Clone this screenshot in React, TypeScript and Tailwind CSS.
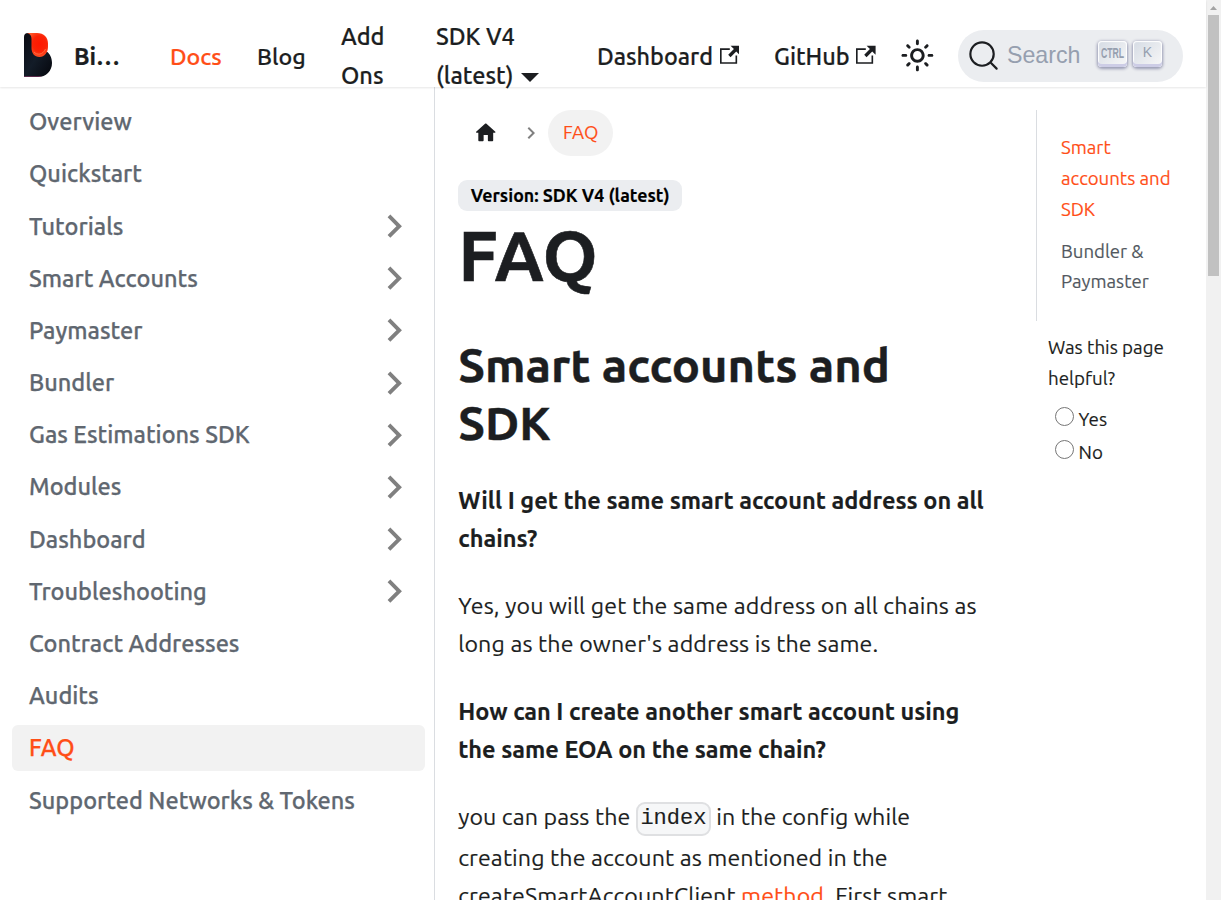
import type { ReactNode } from "react";

const sidebarItems: { label: string; nested?: boolean; active?: boolean }[] = [
  { label: "Overview" },
  { label: "Quickstart" },
  { label: "Tutorials", nested: true },
  { label: "Smart Accounts", nested: true },
  { label: "Paymaster", nested: true },
  { label: "Bundler", nested: true },
  { label: "Gas Estimations SDK", nested: true },
  { label: "Modules", nested: true },
  { label: "Dashboard", nested: true },
  { label: "Troubleshooting", nested: true },
  { label: "Contract Addresses" },
  { label: "Audits" },
  { label: "FAQ", active: true },
  { label: "Supported Networks & Tokens" },
];

function Chevron({ className }: { className: string }) {
  return (
    <svg viewBox="0 0 24 24" className={className} fill="#808080">
      <path transform="rotate(90 12 12)" d="M12 8l-6 6 1.41 1.41L12 10.83l4.59 4.58L18 14z" />
    </svg>
  );
}

function ExternalIcon() {
  return (
    <svg viewBox="0 0 24 24" className="ml-[6.5px] inline h-[19.6px] w-[19.6px] align-baseline" fill="currentColor">
      <path d="M21 13v10h-21v-19h12v2h-10v15h17v-8h2zm3-12h-10.988l4.035 4-6.977 7.07 2.828 2.828 6.977-7.07 4.125 4.172v-11z" />
    </svg>
  );
}

function Logo() {
  return (
    <svg viewBox="0 0 28 44" className="h-11 w-7">
      <defs>
        <linearGradient id="ink" x1="0" y1="0" x2="1" y2="1">
          <stop offset="0" stopColor="#0a0a12" />
          <stop offset="0.5" stopColor="#131c28" />
          <stop offset="1" stopColor="#05060c" />
        </linearGradient>
        <radialGradient id="flame" cx="0.6" cy="0.45" r="0.6">
          <stop offset="0" stopColor="#ff1800" />
          <stop offset="0.55" stopColor="#fb2306" />
          <stop offset="1" stopColor="#ff5a2c" />
        </radialGradient>
      </defs>
      <path d="M0 4Q0 0 4 0H12L22.500 18.500C26 20.500 28 25 28 30C28 38 22 44 14 44H0Z" fill="url(#ink)" />
      <path d="M0 43.600H17" stroke="#9b3a6e" strokeWidth="0.6" />
      <path d="M3 0H13C20 0 24 4.500 24 10.500V14C24 19.500 20.500 24 15.500 24C10.500 24 7.500 20 7.500 15V6C7.500 2.500 6 0.600 3 0Z" fill="url(#flame)" />
      <path d="M10 19C13 22.500 19 22 21.500 16" fill="none" stroke="#ff7045" strokeWidth="0.9" />
    </svg>
  );
}

function SunIcon() {
  return (
    <svg viewBox="0 0 24 24" className="h-[34.8px] w-[34.8px]" fill="currentColor">
      <path d="M12,9c1.65,0,3,1.35,3,3s-1.35,3-3,3s-3-1.35-3-3S10.35,9,12,9 M12,7c-2.76,0-5,2.24-5,5s2.24,5,5,5s5-2.24,5-5 S14.76,7,12,7L12,7z M2,13l2,0c0.55,0,1-0.45,1-1s-0.45-1-1-1l-2,0c-0.55,0-1,0.45-1,1S1.45,13,2,13z M20,13l2,0c0.55,0,1-0.45,1-1 s-0.45-1-1-1l-2,0c-0.55,0-1,0.45-1,1S19.45,13,20,13z M11,2v2c0,0.55,0.45,1,1,1s1-0.45,1-1V2c0-0.55-0.45-1-1-1S11,1.45,11,2z M11,20v2c0,0.55,0.45,1,1,1s1-0.45,1-1v-2c0-0.55-0.45-1-1-1C11.45,19,11,19.45,11,20z M5.99,4.58c-0.39-0.39-1.03-0.39-1.41,0 c-0.39,0.39-0.39,1.03,0,1.41l1.06,1.06c0.39,0.39,1.03,0.39,1.41,0s0.39-1.03,0-1.41L5.99,4.58z M18.36,16.95 c-0.39-0.39-1.03-0.39-1.41,0c-0.39,0.39-0.39,1.03,0,1.41l1.06,1.06c0.39,0.39,1.03,0.39,1.41,0c0.39-0.39,0.39-1.03,0-1.41 L18.36,16.95z M19.42,5.99c0.39-0.39,0.39-1.03,0-1.41c-0.39-0.39-1.03-0.39-1.41,0l-1.06,1.06c-0.39,0.39-0.39,1.03,0,1.41 s1.03,0.39,1.41,0L19.42,5.99z M7.05,18.36c0.39-0.39,0.39-1.03,0-1.41c-0.39-0.39-1.03-0.39-1.41,0l-1.06,1.06 c-0.39,0.39-0.39,1.03,0,1.41s1.03,0.39,1.41,0L7.05,18.36z" />
    </svg>
  );
}

function Key({ children }: { children: ReactNode }) {
  return (
    <span className="flex h-[26px] w-[29px] justify-center rounded-[4px] bg-[linear-gradient(-225deg,#d5dbe4,#f8f8f8)] text-[#969faf] shadow-[inset_0_-3px_0_0_#cdcde6,inset_0_0_1px_1px_#fff,0_1px_3px_1px_rgba(30,35,90,0.4)]">
      {children}
    </span>
  );
}

function Navbar() {
  return (
    <header className="relative z-10 flex h-[87px] shrink-0 items-center bg-white pl-6 font-medium whitespace-nowrap shadow-[0_1px_2px_0_rgba(0,0,0,0.1)] [-webkit-text-stroke:0.2px]">
      <div className="w-[50px] pt-[23px]"><Logo /></div>
      <nav className="flex items-center pt-[24px] leading-[39px]">
        <b className="w-24 pt-[2px] font-bold">Bi…</b>
        <a className="w-[87px] pt-[2px] text-[23.2px] text-[#ff4e17]">Docs</a>
        <a className="w-[84px] pt-[2px] text-[23.2px]">Blog</a>
        <a className="w-[95px]">Add<br />Ons</a>
        <a className="w-[161px]">
          SDK V4<br />(latest)
          <svg viewBox="0 0 18 9" className="ml-[8px] inline h-[9px] w-[18px]" fill="currentColor"><path d="M0 0H18L9 9Z" /></svg>
        </a>
        <a className="w-[177px] pt-[2px] text-[23.4px]">Dashboard<ExternalIcon /></a>
        <a className="w-[125px] pt-[2px]">GitHub<ExternalIcon /></a>
      </nav>
      <div className="mt-[24px] flex w-[59px] pl-[1px]"><SunIcon /></div>
      <div className="mt-[25px] flex h-[52px] w-[225px] items-center rounded-full bg-[#ebedf0] pl-[10px] font-['Liberation_Sans',sans-serif] font-normal [-webkit-text-stroke:0]">
        <svg viewBox="0 0 20 20" className="mb-[2px] h-[31px] w-[31px]" fill="none" stroke="currentColor" strokeWidth="1.4" strokeLinecap="round" strokeLinejoin="round">
          <path d="M14.386 14.386l4.0877 4.0877-4.0877-4.0877c-2.9418 2.9419-7.7115 2.9419-10.6533 0-2.9419-2.9418-2.9419-7.7115 0-10.6533 2.9418-2.9419 7.7115-2.9419 10.6533 0 2.9419 2.9418 2.9419 7.7115 0 10.6533z" />
        </svg>
        <span className="w-[99px] pb-[2px] pl-[8px] text-[23.2px] text-[#969faf]">Search</span>
        <span className="flex gap-[6px] pb-[4px]">
          <Key><span className="w-[23px]"><span className="block origin-left scale-x-[0.62] text-[14px] leading-[24px] font-bold">CTRL</span></span></Key>
          <Key><span className="text-[14px] leading-[23px]">K</span></Key>
        </span>
      </div>
    </header>
  );
}

function Sidebar() {
  return (
    <aside className="w-[435px] shrink-0 border-r border-[#dadde1] pt-[11.6px] pr-[9px] pl-3">
      <ul className="flex flex-col gap-[5.8px]">
        {sidebarItems.map((item) => (
          <li
            key={item.label}
            className={
              "flex h-[46.4px] items-center justify-between rounded-[6px] pr-[8px] pl-[17px] font-medium whitespace-nowrap [-webkit-text-stroke:0.25px] " +
              (item.active ? "bg-[#f2f2f2] text-[#ff4e17]" : "text-[#606770]")
            }
          >
            <span>{item.label}</span>
            {item.nested && <Chevron className="h-[46.4px] w-[46.4px]" />}
          </li>
        ))}
      </ul>
    </aside>
  );
}

function Article() {
  return (
    <article className="w-[578px] pt-[23px] pl-[23.2px] leading-[38.3px] whitespace-nowrap [-webkit-text-stroke:0.15px]">
      <nav className="flex h-[46px] items-center text-[18.6px]">
        <svg viewBox="0 0 24 24" className="mb-[1px] ml-[15px] h-[25.5px] w-[25.5px]" fill="currentColor">
          <path d="M10 19v-5h4v5c0 .55.45 1 1 1h3c.55 0 1-.45 1-1v-7h1.7c.46 0 .68-.57.33-.87L12.67 3.6c-.38-.34-.96-.34-1.34 0l-8.36 7.53c-.34.3-.13.87.33.87H5v7c0 .55.45 1 1 1h3c.55 0 1-.45 1-1z" />
        </svg>
        <Chevron className="ml-[20px] h-6 w-6" />
        <span className="ml-[5.5px] flex h-[46px] w-[65px] items-center justify-center rounded-[23px] bg-[#f2f2f2] text-[#ff4e17]">FAQ</span>
      </nav>
      <span className="mt-6 flex h-[31px] w-[224px] items-center justify-center rounded-[9px] bg-[#ebedf0] text-[17.75px] font-bold text-black">Version: SDK V4 (latest)</span>
      <h1 className="text-[70.3px] leading-[87px] font-bold [-webkit-text-stroke:0.6px]">FAQ</h1>
      <h2 className="mt-[38px] text-[47.05px] leading-[58px] font-bold [-webkit-text-stroke:0.4px]">Smart accounts and<br />SDK</h2>
      <p className="mt-[29px] font-bold">Will I get the same smart account address on all<br />chains?</p>
      <p className="mt-[28.3px] text-[23.2px] leading-[38.6px] tracking-[0.14px]">Yes, you will get the same address on all chains as<br />long as the owner's address is the same.</p>
      <p className="mt-[29px] font-bold">How can I create another smart account using<br />the same EOA on the same chain?</p>
      <p className="mt-[28.6px] text-[23.2px] tracking-[0.11px]">
        <span className="mb-[0.6px] block">
          you can pass the{" "}
          <code className="relative top-[1px] mb-[2px] inline-block h-[34px] rounded-[9px] border-2 border-[#dfe0e2] bg-[#f6f7f8] px-[2.5px] align-middle font-['Liberation_Mono',monospace] text-[22px] leading-[30px] tracking-normal">index</code>{" "}
          in the config while
        </span>
        creating the account as mentioned in the<br />createSmartAccountClient <a className="text-[#ff4e17]">method</a>. First smart
      </p>
    </article>
  );
}

function Rail() {
  return (
    <aside className="mt-[23px] ml-[23px] w-[150px] text-[18.6px] leading-[30.7px] whitespace-nowrap [-webkit-text-stroke:0.15px]">
      <ul className="flex h-[211px] flex-col gap-[11.2px] border-l border-[#dadde1] pt-[23.4px] pl-6 text-[#525860]">
        <li className="text-[#ff4e17]">Smart<br />accounts and<br />SDK</li>
        <li>Bundler &amp;<br />Paymaster</li>
      </ul>
      <div className="mt-[12px] pl-3 text-[18.75px]">
        <p>Was this page<br />helpful?</p>
        <div className="mt-[11px] flex flex-col gap-[2px] pl-[7px]">
          <label className="flex gap-[4.5px]"><span className="mt-[2px] h-[19px] w-[19px] rounded-full border border-[#767676]" />Yes</label>
          <label className="flex gap-[4.5px]"><span className="mt-[2px] h-[19px] w-[19px] rounded-full border border-[#767676]" />No</label>
        </div>
      </div>
    </aside>
  );
}

export default function App() {
  return (
    <div className="flex h-[900px] w-full overflow-hidden bg-white font-['Ubuntu','Noto_Sans',sans-serif] text-[23.52px] text-[#1c1e21]">
      <div className="flex w-[1206px] flex-col">
        <Navbar />
        <div className="flex min-h-0 flex-1">
          <Sidebar />
          <Article />
          <Rail />
        </div>
      </div>
      <div className="flex w-[15px] flex-col items-center bg-[#f1f1f1]">
        <svg viewBox="0 0 15 15" className="h-[15px] w-[15px]" fill="#a3a3a3"><path d="M4 10H11L7.500 6Z" /></svg>
        <div className="h-[261px] w-[11px] bg-[#c1c1c1]" />
      </div>
    </div>
  );
}
